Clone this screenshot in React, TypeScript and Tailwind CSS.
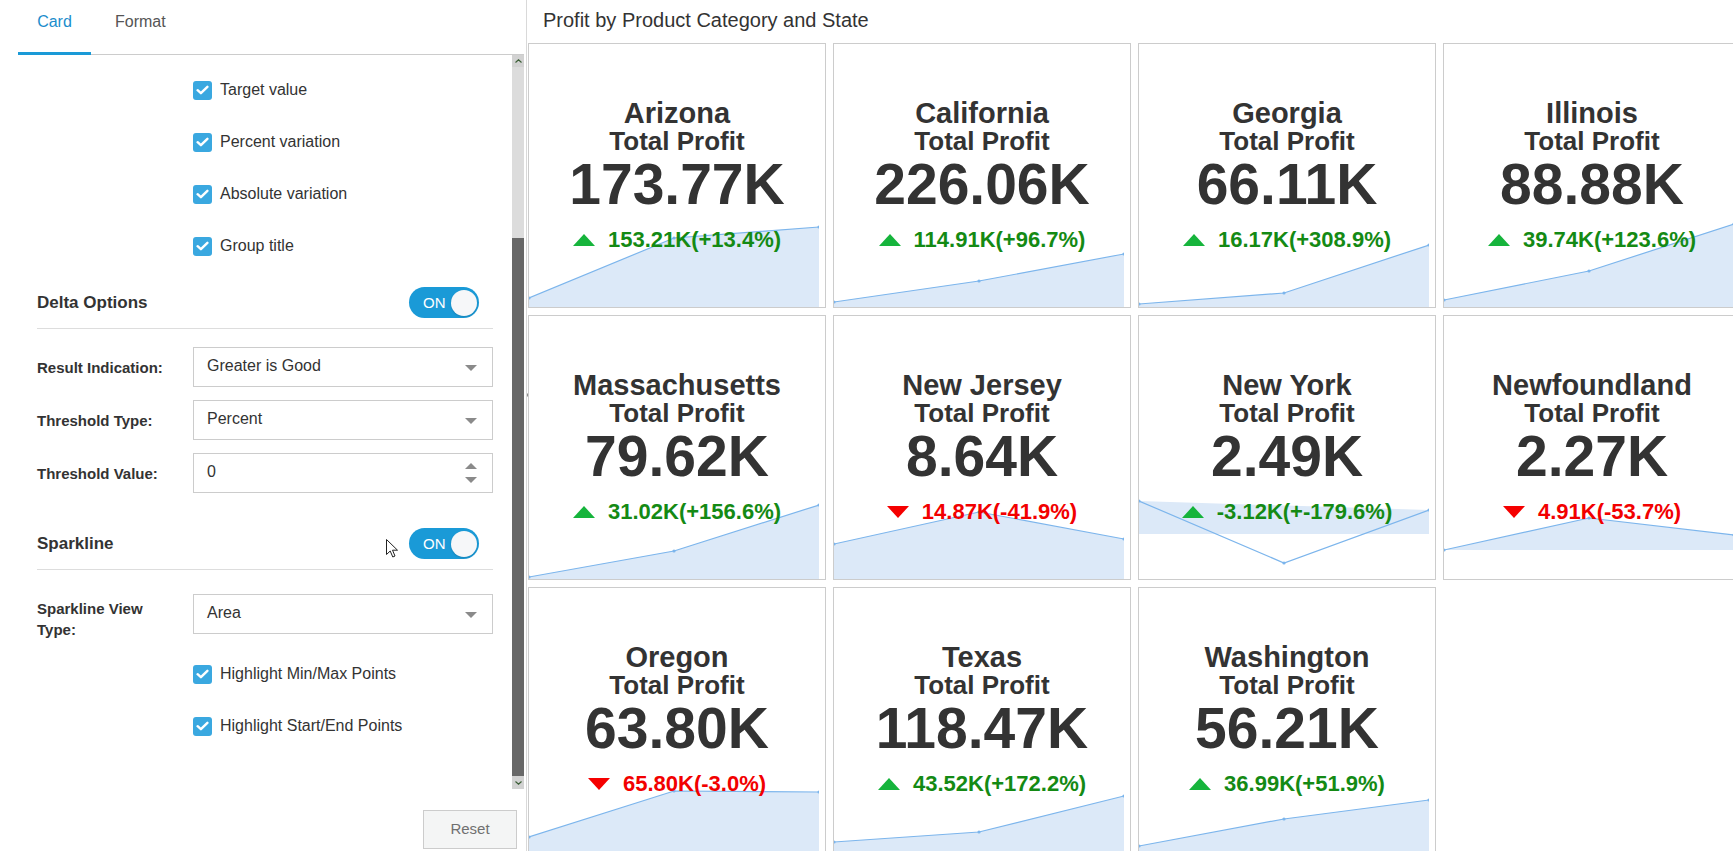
import React from "react";

type CardData = {
  state: string;
  value: string;
  delta: string;
  up: boolean;
  pts: [number, number, number];
  base?: number;
  band?: boolean;
};

const cards: CardData[] = [
  { state: "Arizona", value: "173.77K", delta: "153.21K(+13.4%)", up: true, pts: [255, 195, 184] },
  { state: "California", value: "226.06K", delta: "114.91K(+96.7%)", up: true, pts: [259, 238, 211] },
  { state: "Georgia", value: "66.11K", delta: "16.17K(+308.9%)", up: true, pts: [261, 250, 202] },
  { state: "Illinois", value: "88.88K", delta: "39.74K(+123.6%)", up: true, pts: [257, 228, 181] },
  { state: "Massachusetts", value: "79.62K", delta: "31.02K(+156.6%)", up: true, pts: [262, 236, 190] },
  { state: "New Jersey", value: "8.64K", delta: "14.87K(-41.9%)", up: false, pts: [229, 197, 224] },
  { state: "New York", value: "2.49K", delta: "-3.12K(+-179.6%)", up: true, pts: [186, 248, 195], base: 219, band: true },
  { state: "Newfoundland", value: "2.27K", delta: "4.91K(-53.7%)", up: false, pts: [235, 203, 220], base: 235 },
  { state: "Oregon", value: "63.80K", delta: "65.80K(-3.0%)", up: false, pts: [250, 204, 205] },
  { state: "Texas", value: "118.47K", delta: "43.52K(+172.2%)", up: true, pts: [255, 245, 209] },
  { state: "Washington", value: "56.21K", delta: "36.99K(+51.9%)", up: true, pts: [259, 232, 213] },
];

function Sparkline({ pts, base = 264, band }: { pts: [number, number, number]; base?: number; band?: boolean }) {
  const [a, b, c] = pts;
  const line = `0,${a} 145,${b} 290,${c}`;
  const area = band
    ? `0,${a} 290,${c} 290,${base} 0,${base}`
    : `0,${a} 145,${b} 290,${c} 290,${base} 0,${base}`;
  return (
    <svg className="absolute left-0 top-[-1px]" width="290" height="265" viewBox="0 0 290 265">
      <polygon points={area} fill="#dce9f8" />
      <polyline points={line} fill="none" stroke="#7cb5ec" strokeWidth="1.2" />
      {[
        [0, a],
        [145, b],
        [290, c],
      ].map(([x, y]) => (
        <circle key={x} cx={x} cy={y} r="1.6" fill="#7cb5ec" />
      ))}
    </svg>
  );
}

function KpiCard({ card }: { card: CardData }) {
  return (
    <div className="relative h-[265px] w-[298px] overflow-hidden border border-[#cccccc] bg-white">
      <Sparkline pts={card.pts} base={card.base} band={card.band} />
      <div className="relative flex h-full flex-col items-center justify-center text-[#333333]">
        <div className="text-[29px] font-bold leading-[28px]">{card.state}</div>
        <div className="text-[26px] font-bold leading-[28px]">Total Profit</div>
        <div className="text-[57px] font-bold leading-[58px]">{card.value}</div>
        <div className="mt-[14px] flex h-[26px] items-center gap-[13px]">
          {card.up ? (
            <svg width="22" height="12" viewBox="0 0 22 12">
              <polygon points="0,12 11,0 22,12" fill="#16b43c" />
            </svg>
          ) : (
            <svg width="22" height="12" viewBox="0 0 22 12">
              <polygon points="0,0 22,0 11,12" fill="#f50000" />
            </svg>
          )}
          <span
            className={
              card.up
                ? "text-[22px] font-bold leading-[26px] text-[#148a14]"
                : "text-[22px] font-bold leading-[26px] text-[#f20000]"
            }
          >
            {card.delta}
          </span>
        </div>
      </div>
    </div>
  );
}

function Check({ label }: { label: string }) {
  return (
    <div className="flex h-[52px] items-center pl-[193px]">
      <span className="flex h-[19px] w-[19px] items-center justify-center rounded-[3px] bg-[#3aa8e0]">
        <svg width="13" height="10" viewBox="0 0 13 10">
          <path d="M1.6 5.2 L4.9 8.2 L11.4 1.8" fill="none" stroke="#ffffff" strokeWidth="2.4" strokeLinecap="round" strokeLinejoin="round" />
        </svg>
      </span>
      <span className="ml-[8px] text-[16px] leading-[20px] text-[#333333]">{label}</span>
    </div>
  );
}

function Toggle() {
  return (
    <div className="mr-[14px] flex h-[31px] w-[70px] items-center justify-between rounded-full bg-[#1a9ad7] pl-[14px] pr-[2px]">
      <span className="text-[15px] leading-[16px] text-white">ON</span>
      <span className="h-[26px] w-[26px] rounded-full bg-[#f6f7f9] shadow-[0_1px_2px_rgba(0,0,0,0.15)]" />
    </div>
  );
}

function Heading({ title }: { title: string }) {
  return (
    <div className="ml-[37px] mr-[19px] border-b border-[#dddddd] pb-[10px]">
      <div className="flex h-[31px] items-center justify-between">
        <span className="text-[17px] font-bold text-[#333333]">{title}</span>
        <Toggle />
      </div>
    </div>
  );
}

function Caret() {
  return (
    <svg className="absolute right-[15px] top-[17px]" width="12" height="6" viewBox="0 0 12 6">
      <polygon points="0,0 12,0 6,6" fill="#8a8a8a" />
    </svg>
  );
}

function Field({ label, value, kind, wrap }: { label: string; value: string; kind: "select" | "spin"; wrap?: boolean }) {
  return (
    <div className={wrap ? "ml-[37px] mr-[19px] flex items-start" : "ml-[37px] mr-[19px] flex items-center"}>
      <div className={wrap ? "w-[156px] pt-[4px]" : "w-[156px]"}>
        <div className="w-[145px] text-[15px] font-bold leading-[21px] text-[#333333]">{label}</div>
      </div>
      <div className="relative h-[40px] flex-1 border border-[#cccccc] pl-[13px] pt-[8px] text-[16px] leading-[20px] text-[#333333]">
        {value}
        {kind === "select" ? (
          <Caret />
        ) : (
          <div className="absolute right-[15px] top-[9px] flex flex-col gap-[8px]">
            <svg width="12" height="6" viewBox="0 0 12 6">
              <polygon points="0,6 12,6 6,0" fill="#8a8a8a" />
            </svg>
            <svg width="12" height="6" viewBox="0 0 12 6">
              <polygon points="0,0 12,0 6,6" fill="#8a8a8a" />
            </svg>
          </div>
        )}
      </div>
    </div>
  );
}

function Scrollbar() {
  return (
    <div className="flex h-[734px] w-[12px] flex-col bg-[#dcdcdc]">
      <div className="flex h-[12px] items-center justify-center bg-[#d2d2d2]">
        <svg width="7" height="4" viewBox="0 0 7 4">
          <path d="M0.5 3.5 L3.5 0.8 L6.5 3.5" fill="none" stroke="#3b5e36" strokeWidth="1.2" />
        </svg>
      </div>
      <div className="h-[171px]" />
      <div className="h-[538px] bg-[#686868]" />
      <div className="flex flex-1 items-center justify-center bg-[#d2d2d2]">
        <svg width="7" height="4" viewBox="0 0 7 4">
          <path d="M0.5 0.5 L3.5 3.2 L6.5 0.5" fill="none" stroke="#3b5e36" strokeWidth="1.2" />
        </svg>
      </div>
    </div>
  );
}

function LeftPanel() {
  return (
    <div className="relative flex h-[851px] w-[524px] shrink-0 flex-col">
      <div className="ml-[18px] flex h-[55px] border-b border-[#cccccc]">
        <div className="relative w-[73px] pt-[12px] text-center text-[16px] leading-[20px] text-[#1b8dcc]">
          Card
          <div className="absolute bottom-[-1px] left-0 right-0 h-[3px] bg-[#1a9ad7]" />
        </div>
        <div className="px-[24px] pt-[12px] text-[16px] leading-[20px] text-[#555555]">Format</div>
      </div>
      <div className="flex h-[734px]">
        <div className="h-[734px] w-[512px] overflow-hidden">
          <div className="pt-[9px]">
            <Check label="Target value" />
            <Check label="Percent variation" />
            <Check label="Absolute variation" />
            <Check label="Group title" />
          </div>
          <div className="mt-[15px]">
            <Heading title="Delta Options" />
          </div>
          <div className="mt-[18px] flex flex-col gap-[13px]">
            <Field label="Result Indication:" value="Greater is Good" kind="select" />
            <Field label="Threshold Type:" value="Percent" kind="select" />
            <Field label="Threshold Value:" value="0" kind="spin" />
          </div>
          <div className="mt-[35px]">
            <Heading title="Sparkline" />
          </div>
          <div className="mt-[24px]">
            <Field label="Sparkline View Type:" value="Area" kind="select" wrap />
          </div>
          <div className="mt-[8px]">
            <Check label="Highlight Min/Max Points" />
            <Check label="Highlight Start/End Points" />
          </div>
        </div>
        <Scrollbar />
      </div>
      <div className="flex justify-end pr-[7px] pt-[21px]">
        <button className="h-[39px] w-[94px] border border-[#cccccc] bg-[#f4f5f5] text-[15px] text-[#707070]">
          Reset
        </button>
      </div>
      <svg className="absolute left-[386px] top-[539px]" width="13" height="19" viewBox="0 0 13 19">
        <path d="M0.5 0.5 L0.5 15.5 L4.2 12 L6.8 18 L9 17 L6.5 11.2 L11.5 11.2 Z" fill="#ffffff" stroke="#222222" strokeWidth="1" strokeLinejoin="round" />
      </svg>
    </div>
  );
}

export default function App() {
  return (
    <div className="flex h-[851px] w-[1733px] overflow-hidden bg-white font-['Liberation_Sans',Arial,sans-serif] text-[#333333]">
      <LeftPanel />
      <div className="relative ml-[2px] min-w-0 flex-1 overflow-hidden border-l border-[#d9d9d9] pl-px">
        <svg className="absolute left-[-1px] top-[390px]" width="5" height="10" viewBox="0 0 5 10">
          <polygon points="5,0 5,10 0,5" fill="#8c8c8c" />
        </svg>
        <div className="h-[43px] pl-[15px] pt-[8px] text-[20px] leading-[24px] text-[#333333]">
          Profit by Product Category and State
        </div>
        <div className="grid grid-cols-[repeat(4,298px)] auto-rows-[265px] gap-[7px]">
          {cards.map((c) => (
            <KpiCard key={c.state} card={c} />
          ))}
        </div>
      </div>
    </div>
  );
}
